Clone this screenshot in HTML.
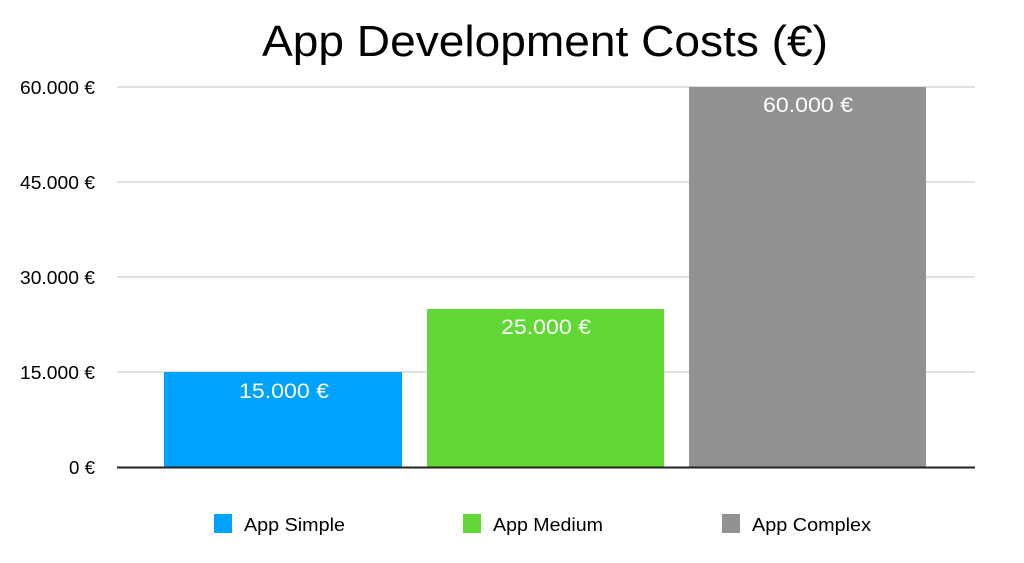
<!DOCTYPE html>
<html><head><meta charset="utf-8"><style>html,body{margin:0;padding:0;background:#fff;}svg{display:block}</style></head>
<body>
<svg width="1024" height="563" xmlns="http://www.w3.org/2000/svg" font-family="'Liberation Sans', sans-serif">
<rect width="1024" height="563" fill="#fff"/>
<text x="545" y="56" font-size="44" text-anchor="middle" textLength="566" lengthAdjust="spacingAndGlyphs" fill="#000">App Development Costs (€)</text>
<g stroke="#d6d6d6" stroke-width="1.5">
<line x1="117" y1="87" x2="975" y2="87"/>
<line x1="117" y1="182" x2="975" y2="182"/>
<line x1="117" y1="277" x2="975" y2="277"/>
<line x1="117" y1="372" x2="975" y2="372"/>
</g>
<g font-size="18" fill="#000" lengthAdjust="spacingAndGlyphs">
<text x="20" y="94" textLength="75" lengthAdjust="spacingAndGlyphs">60.000 €</text>
<text x="20" y="189" textLength="75" lengthAdjust="spacingAndGlyphs">45.000 €</text>
<text x="20" y="284" textLength="75" lengthAdjust="spacingAndGlyphs">30.000 €</text>
<text x="20" y="379" textLength="75" lengthAdjust="spacingAndGlyphs">15.000 €</text>
<text x="69" y="474" textLength="26" lengthAdjust="spacingAndGlyphs">0 €</text>
</g>
<rect x="164" y="372" width="238" height="95" fill="#00a2ff"/>
<rect x="427" y="309" width="237" height="158" fill="#61d836"/>
<rect x="689" y="87" width="237" height="380" fill="#929292"/>
<line x1="117" y1="467.5" x2="975" y2="467.5" stroke="#222" stroke-width="2"/>
<g font-size="21" fill="#fff">
<text x="239" y="398" textLength="90" lengthAdjust="spacingAndGlyphs">15.000 €</text>
<text x="501" y="334" textLength="90" lengthAdjust="spacingAndGlyphs">25.000 €</text>
<text x="763" y="112" textLength="90" lengthAdjust="spacingAndGlyphs">60.000 €</text>
</g>
<rect x="214" y="514" width="18" height="19" fill="#00a2ff"/>
<rect x="463" y="514" width="18" height="19" fill="#61d836"/>
<rect x="722" y="514" width="18" height="19" fill="#929292"/>
<g font-size="18" fill="#000">
<text x="244" y="531" textLength="101" lengthAdjust="spacingAndGlyphs">App Simple</text>
<text x="493" y="531" textLength="110" lengthAdjust="spacingAndGlyphs">App Medium</text>
<text x="752" y="531" textLength="119" lengthAdjust="spacingAndGlyphs">App Complex</text>
</g>
</svg>
</body></html>
